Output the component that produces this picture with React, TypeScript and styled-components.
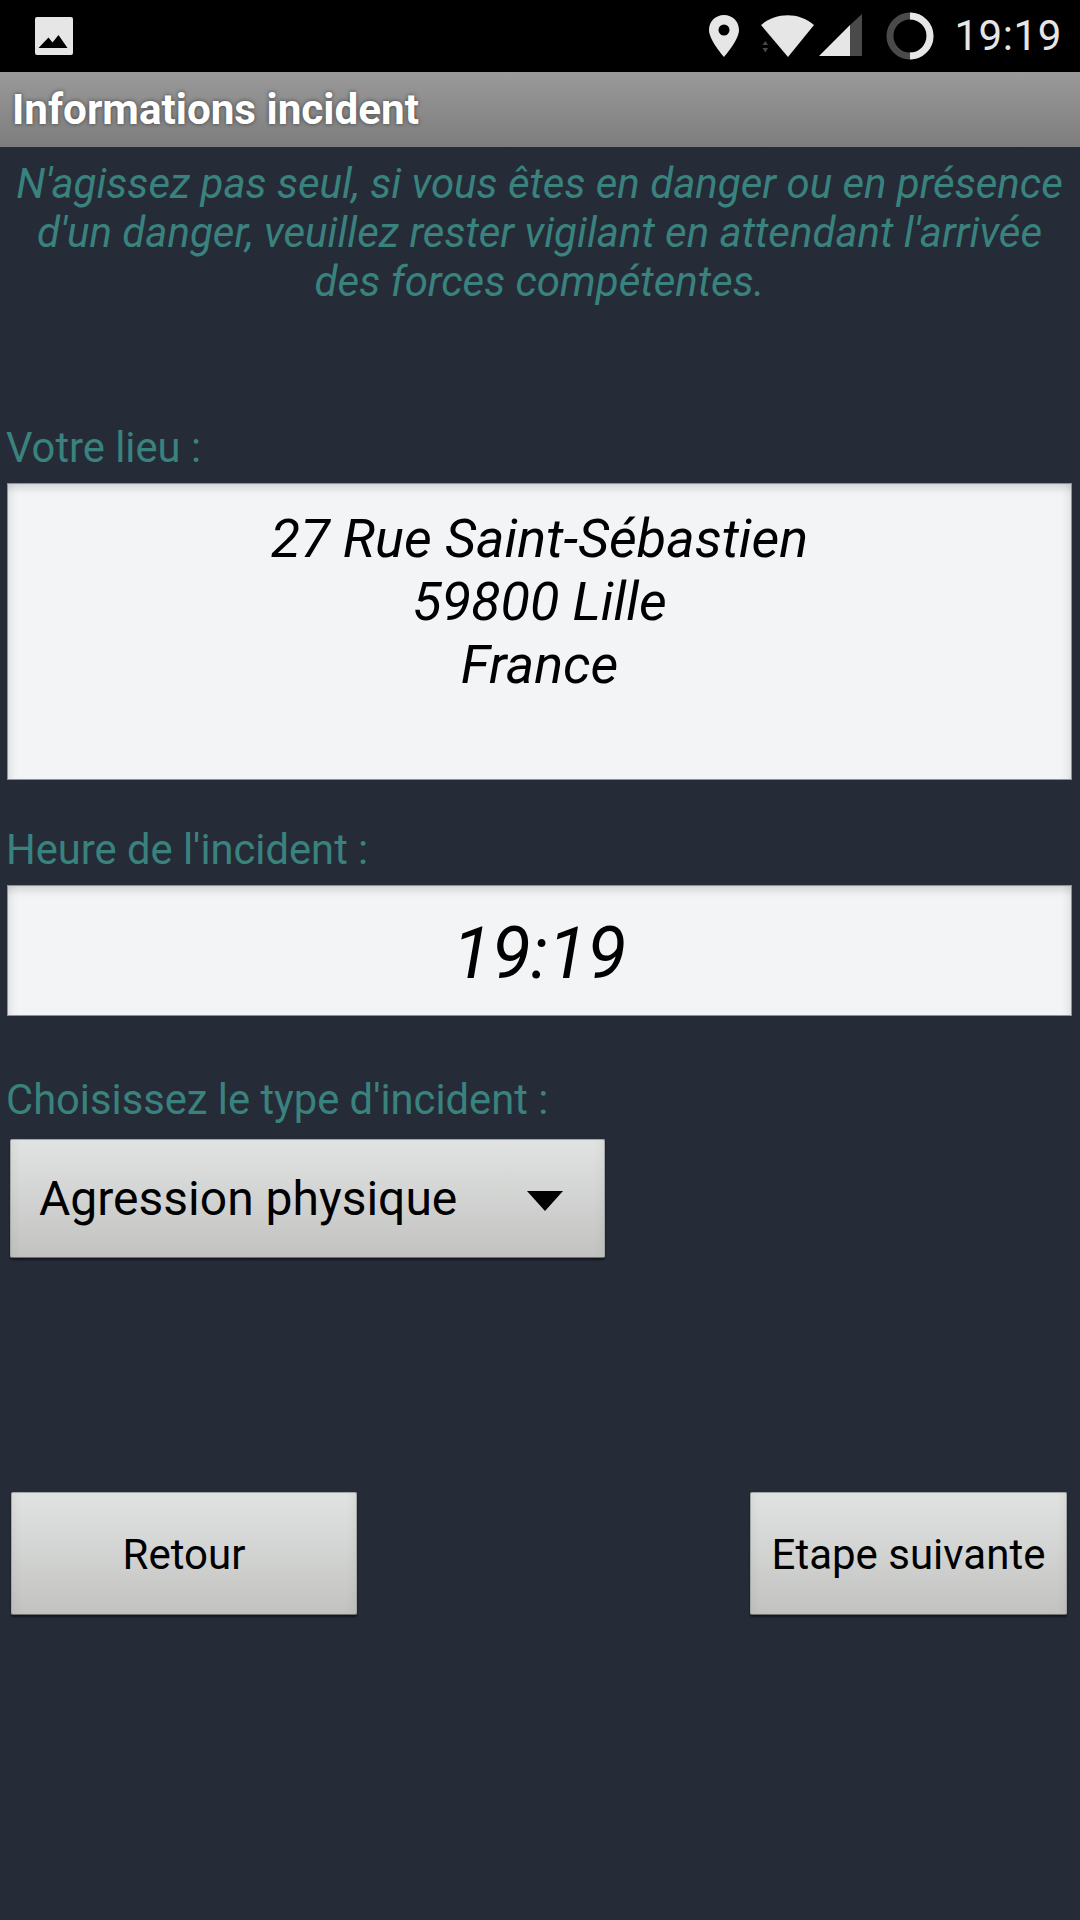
import React from "react";
import styled, { createGlobalStyle } from "styled-components";

const Global = createGlobalStyle`
  html, body { margin: 0; padding: 0; background: #252c38; }
  * { box-sizing: border-box; }
`;

const Screen = styled.div`
  width: 1080px;
  height: 1920px;
  background: #252c38;
  font-family: Roboto, "Liberation Sans", sans-serif;
  display: flex;
  flex-direction: column;
  overflow: hidden;
`;

const StatusBar = styled.div`
  height: 72px;
  background: #000;
  display: flex;
  align-items: center;
  padding: 0 18px 0 34px;
`;

const StatusRight = styled.div`
  margin-left: auto;
  display: flex;
  align-items: center;
`;

const Clock = styled.span`
  font-size: 42px;
  line-height: 72px;
  color: #e6e6e6;
  margin-left: 20px;
  letter-spacing: 0.6px;
`;

const Icon = styled.svg<{ $ml?: number }>`
  display: block;
  flex: none;
  margin-left: ${(p) => p.$ml ?? 0}px;
`;

const TitleBar = styled.div`
  height: 75px;
  background: linear-gradient(#9a9a9a, #7d7d7d);
  display: flex;
  align-items: center;
  padding: 0 12px;
`;

const Title = styled.h1`
  margin: 0;
  font-size: 42.2px;
  font-weight: 700;
  color: #fff;
  text-shadow: 0 0 4px rgba(0, 0, 0, 0.55);
`;

const Content = styled.div`
  flex: 1;
  display: flex;
  flex-direction: column;
  padding: 12px 8px 0 7px;
`;

const Notice = styled.p`
  margin: 0 -7px;
  text-align: center;
  font-style: italic;
  font-size: 42px;
  line-height: 49px;
  color: #3a827e;
`;

const Label = styled.div<{ $mt: number }>`
  margin: ${(p) => p.$mt}px 0 0 -1px;
  font-size: 41.7px;
  line-height: 47px;
  color: #3a827e;
`;

const Field = styled.div<{ $h: number; $size: number; $lh: number; $pt: number }>`
  margin-top: 12px;
  height: ${(p) => p.$h}px;
  padding-top: ${(p) => p.$pt}px;
  background: #f3f4f6;
  border: 1px solid #8e9196;
  box-shadow: inset 0 9px 9px -5px rgba(0, 0, 0, 0.14),
    inset 9px 0 9px -6px rgba(0, 0, 0, 0.08),
    inset -9px 0 9px -6px rgba(0, 0, 0, 0.08);
  text-align: center;
  font-style: italic;
  font-size: ${(p) => p.$size}px;
  line-height: ${(p) => p.$lh}px;
  color: #000;
`;

const raised = `
  background: linear-gradient(#e1e3e2, #c2c3c1);
  border-radius: 2px;
  border: 1px solid #a4a6a6;
  border-bottom-color: #6d6f70;
  box-shadow: 0 2px 2px rgba(0, 0, 0, 0.5), inset 8px 0 12px -8px rgba(0, 0, 0, 0.07), inset -8px 0 12px -8px rgba(0, 0, 0, 0.07);
  color: #000;
  font-family: inherit;
`;

const Spinner = styled.div`
  ${raised}
  margin: 16px 0 0 3px;
  width: 595px;
  height: 119px;
  display: flex;
  align-items: center;
  justify-content: space-between;
  padding: 0 41px 0 28px;
  font-size: 48px;
`;

const Caret = styled.div`
  width: 0;
  height: 0;
  border-left: 18px solid transparent;
  border-right: 18px solid transparent;
  border-top: 20px solid #000;
  margin-top: 4px;
`;

const Actions = styled.div`
  margin-top: 234px;
  padding: 0 5px 0 4px;
  display: flex;
  justify-content: space-between;
`;

const ActionButton = styled.button<{ $w: number }>`
  ${raised}
  width: ${(p) => p.$w}px;
  height: 123px;
  padding: 2px 0 0;
  font-size: 42px;
`;

export default function App() {
  return (
    <Screen>
      <Global />
      <StatusBar>
        <Icon width="40" height="40" viewBox="0 0 40 40">
          <path
            fillRule="evenodd"
            fill="#e6e6e6"
            d="M3 1h34a2 2 0 0 1 2 2v34a2 2 0 0 1-2 2H3a2 2 0 0 1-2-2V3a2 2 0 0 1 2-2zM4.500 32h29L24.500 19l-6 7.500-4-5z"
          />
        </Icon>
        <StatusRight>
          <Icon width="32" height="44" viewBox="0 0 32 44">
            <path
              fillRule="evenodd"
              fill="#e6e6e6"
              d="M16 1C7.500 1 1 7.500 1 16c0 10 15 27 15 27s15-17 15-27C31 7.500 24.500 1 16 1zm0 9.500a5.500 5.500 0 1 1 0 11 5.500 5.500 0 0 1 0-11z"
            />
          </Icon>
          <Icon width="54" height="44" viewBox="0 0 54 44" $ml={21}>
            <path fill="#e6e6e6" d="M0 10C15-3 38-3 53 10L27 42z" transform="translate(0 1)" />
            <path fill="#4a4a4a" d="M7 31l-5.500-0 2.800-4zM1.500 34H7l-2.700 4.500z" />
          </Icon>
          <Icon width="44" height="44" viewBox="0 0 44 44" $ml={4}>
            <path fill="#e6e6e6" d="M0 42L31 11v31z" />
            <path fill="#4a4a4a" d="M31 11L43 0v42H31z" />
          </Icon>
          <Icon width="48" height="48" viewBox="0 0 48 48" $ml={23}>
            <circle cx="24" cy="24" r="20" fill="none" stroke="#4a4a4a" strokeWidth="7" />
            <path d="M24 4a20 20 0 0 1 0 40" fill="none" stroke="#e6e6e6" strokeWidth="7" />
          </Icon>
          <Clock>19:19</Clock>
        </StatusRight>
      </StatusBar>
      <TitleBar>
        <Title>Informations incident</Title>
      </TitleBar>
      <Content>
        <Notice>
          N'agissez pas seul, si vous êtes en danger ou en présence
          <br />
          d'un danger, veuillez rester vigilant en attendant l'arrivée
          <br />
          des forces compétentes.
        </Notice>
        <Label $mt={118}>Votre lieu :</Label>
        <Field $h={297} $size={54} $lh={63} $pt={23}>
          27 Rue Saint-Sébastien
          <br />
          59800 Lille
          <br />
          France
        </Field>
        <Label $mt={46}>Heure de l'incident :</Label>
        <Field $h={131} $size={72} $lh={129} $pt={3}>
          19:19
        </Field>
        <Label $mt={60}>Choisissez le type d'incident :</Label>
        <Spinner>
          Agression physique
          <Caret />
        </Spinner>
        <Actions>
          <ActionButton $w={346}>Retour</ActionButton>
          <ActionButton $w={317}>Etape suivante</ActionButton>
        </Actions>
      </Content>
    </Screen>
  );
}
